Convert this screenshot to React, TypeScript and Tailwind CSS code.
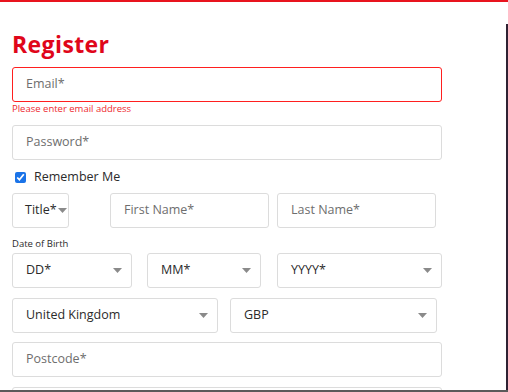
import React from "react";

const font = { fontFamily: '"Open Sans", "Noto Sans", sans-serif' };

function Caret() {
    return (
        <svg width="9" height="5" viewBox="0 0 9 5" className="shrink-0">
            <path d="M0 0h9L4.5 5z" fill="#8a8a8a" />
        </svg>
    );
}

function TextField({ label, className = "", invalid = false }: { label: string; className?: string; invalid?: boolean }) {
    return (
        <div
            className={`h-[35px] flex items-center pl-[13px] rounded-[3px] border bg-white text-[12.5px] text-[#6e6e6e] ${
                invalid ? "border-[#ff1f1f]" : "border-[#dcdcdc]"
            } ${className}`}
        >
            {label}
        </div>
    );
}

function SelectField({ label, className = "", tight = false }: { label: string; className?: string; tight?: boolean }) {
    return (
        <div
            className={`h-[35px] flex items-center rounded-[3px] border border-[#dcdcdc] bg-white text-[12.5px] text-[#2b2b2b] ${
                tight ? "pl-[12px] gap-[1px]" : "pl-[13px] pr-[9px] justify-between"
            } ${className}`}
        >
            <span>{label}</span>
            <Caret />
        </div>
    );
}

export default function App() {
    return (
        <div className="relative w-[508px] h-[392px] overflow-hidden bg-white" style={font}>
            <div className="h-[2px] bg-[#e8141e]" />
            <div className="absolute right-0 top-[24px] bottom-0 w-[2px] bg-[#2f2233]" />
            <div className="absolute left-0 right-0 bottom-0 h-[2px] bg-[#5a5a5a]" />

            <div className="pl-[12px] w-[442px]">
                <h1 className="mt-[28px] text-[23px] leading-[28px] font-bold text-[#e0061a] tracking-[0.4px]">Register</h1>

                <TextField label="Email*" invalid className="mt-[9px]" />
                <p className="mt-[1px] text-[9.5px] leading-[11px] text-[#ee2a2f]">Please enter email address</p>

                <TextField label="Password*" className="mt-[11px]" />

                <label className="mt-[10px] flex items-center gap-[8px] pl-[3px] h-[14px] text-[12.5px] text-[#2b2b2b]">
                    <input type="checkbox" defaultChecked className="w-[11px] h-[11px] m-0 accent-[#1a73e8]" />
                    Remember Me
                </label>

                <div className="mt-[9px] flex">
                    <SelectField label="Title*" tight className="w-[57px]" />
                    <TextField label="First Name*" className="ml-[41px] w-[159px]" />
                    <TextField label="Last Name*" className="ml-[8px] w-[159px]" />
                </div>

                <p className="mt-[10px] text-[9.5px] leading-[12px] text-[#2b2b2b]">Date of Birth</p>

                <div className="mt-[3px] flex">
                    <SelectField label="DD*" className="w-[120px]" />
                    <SelectField label="MM*" className="ml-[15px] w-[114px]" />
                    <SelectField label="YYYY*" className="ml-[16px] w-[165px]" />
                </div>

                <div className="mt-[10px] flex">
                    <SelectField label="United Kingdom" className="w-[206px]" />
                    <SelectField label="GBP" className="ml-[12px] w-[207px]" />
                </div>

                <TextField label="Postcode*" className="mt-[9px]" />
                <TextField label="" className="mt-[10px]" />
            </div>
        </div>
    );
}
